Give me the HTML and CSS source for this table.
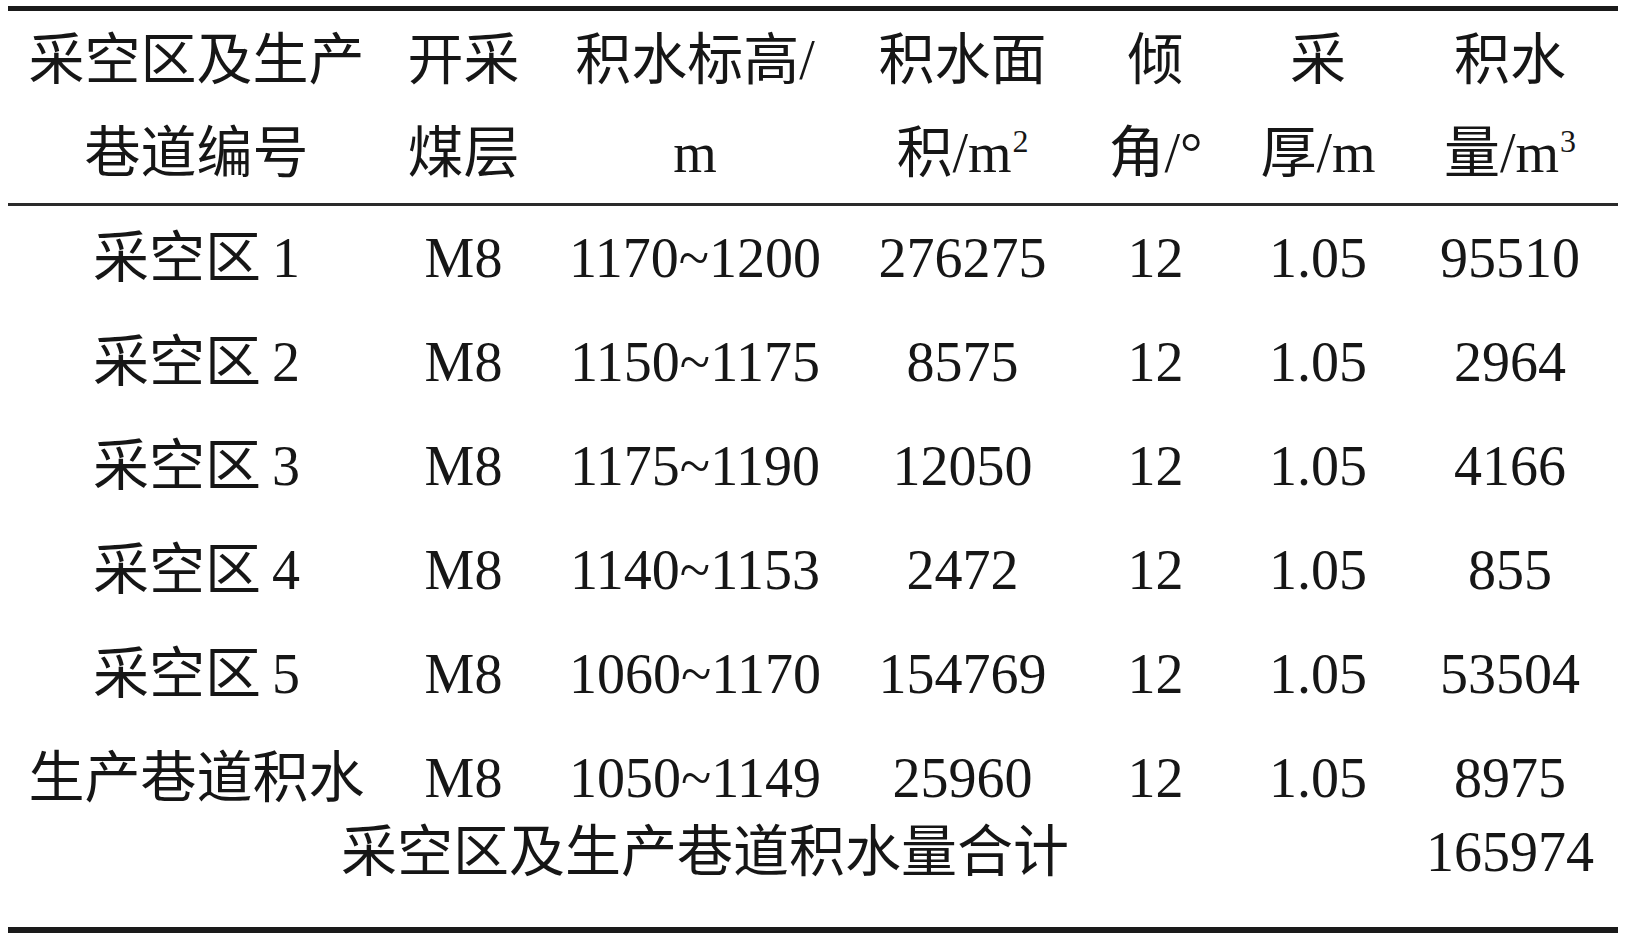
FILE: index.html
```html
<!DOCTYPE html>
<html lang="zh-CN">
<head>
<meta charset="utf-8">
<title>采空区及生产巷道积水量</title>
<link rel="stylesheet" href="styles.css">
</head>
<body>
<table class="data">
  <colgroup>
    <col class="c1"><col class="c2"><col class="c3"><col class="c4"><col class="c5"><col class="c6"><col class="c7">
  </colgroup>
  <thead>
    <tr>
      <th>采空区及生产<br>巷道编号</th>
      <th>开采<br>煤层</th>
      <th>积水标高/<br>m</th>
      <th>积水面<br>积/m<span class="sup">2</span></th>
      <th>倾<br>角/°</th>
      <th>采<br>厚/m</th>
      <th>积水<br>量/m<span class="sup">3</span></th>
    </tr>
  </thead>
  <tbody>
    <tr><td>采空区&#8201;1</td><td>M8</td><td>1170~1200</td><td>276275</td><td>12</td><td>1.05</td><td>95510</td></tr>
    <tr><td>采空区&#8201;2</td><td>M8</td><td>1150~1175</td><td>8575</td><td>12</td><td>1.05</td><td>2964</td></tr>
    <tr><td>采空区&#8201;3</td><td>M8</td><td>1175~1190</td><td>12050</td><td>12</td><td>1.05</td><td>4166</td></tr>
    <tr><td>采空区&#8201;4</td><td>M8</td><td>1140~1153</td><td>2472</td><td>12</td><td>1.05</td><td>855</td></tr>
    <tr><td>采空区&#8201;5</td><td>M8</td><td>1060~1170</td><td>154769</td><td>12</td><td>1.05</td><td>53504</td></tr>
    <tr><td>生产巷道积水</td><td>M8</td><td>1050~1149</td><td>25960</td><td>12</td><td>1.05</td><td>8975</td></tr>
    <tr class="total"><td colspan="6">采空区及生产巷道积水量合计</td><td>165974</td></tr>
  </tbody>
</table>
</body>
</html>
```

FILE: styles.css
```css
html, body {
  margin: 0;
  padding: 0;
  background: #ffffff;
}

.data {
  margin: 6px 0 0 8px;
  width: 1610px;
  table-layout: fixed;
  border-collapse: collapse;
  border-top: 5px solid #1a1a1a;
  border-bottom: 6px solid #1a1a1a;
  font-family: "Liberation Serif", "Noto Sans CJK SC", serif;
  font-size: 56px;
  color: #161616;
}

.c1 { width: 377px; }
.c2 { width: 157px; }
.c3 { width: 306px; }
.c4 { width: 229px; }
.c5 { width: 157px; }
.c6 { width: 168px; }
.c7 { width: 216px; }

.data th,
.data td {
  padding: 0;
  text-align: center;
  vertical-align: middle;
  white-space: nowrap;
  font-weight: normal;
}

.data thead th {
  line-height: 93px;
  padding-top: 3px;
  padding-bottom: 3px;
  border-bottom: 3px solid #2a2a2a;
}

.data tbody td {
  height: 104px;
  line-height: 104px;
}

.data tbody .total td {
  height: 44px;
  line-height: 44px;
  padding-bottom: 53px;
}

.sup {
  display: inline-block;
  font-size: 32px;
  line-height: 32px;
  vertical-align: 20px;
  margin-left: 1px;
}
```
